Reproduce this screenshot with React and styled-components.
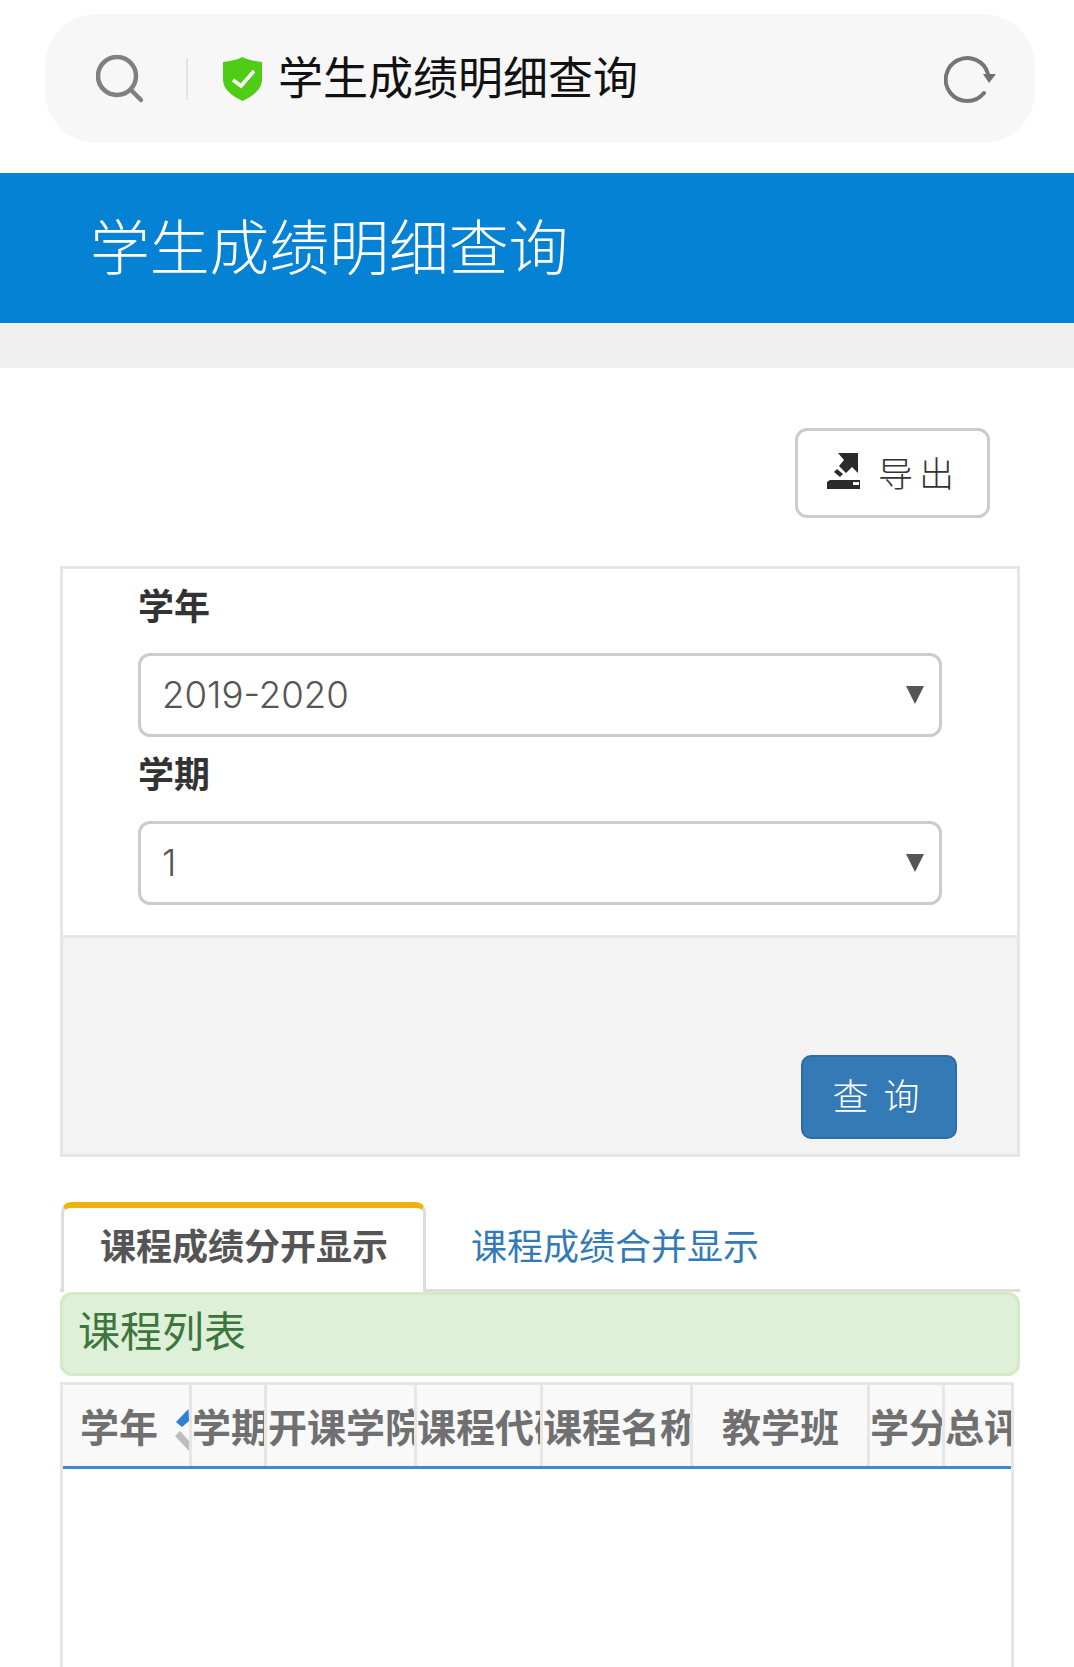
import styled, { createGlobalStyle } from 'styled-components';

const GlobalStyle = createGlobalStyle`
  html, body {
    margin: 0;
    padding: 0;
    background: #ffffff;
  }
  * {
    box-sizing: border-box;
  }
`;

const Page = styled.div`
  width: 1074px;
  height: 1667px;
  overflow: hidden;
  display: flex;
  flex-direction: column;
  font-family: 'Noto Sans CJK SC', 'Noto Sans', sans-serif;
`;

const BrowserBar = styled.div`
  margin: 14px 39px 30px 45px;
  height: 129px;
  flex: none;
  padding: 0 39px 0 51px;
  border-radius: 52px;
  background: #f7f7f7;
  display: flex;
  align-items: center;
`;

const BarDivider = styled.div`
  width: 2px;
  height: 42px;
  margin: 0 34px 0 43px;
  background: #e4e4e4;
`;

const BarTitle = styled.div`
  flex: 1;
  margin-left: 15px;
  padding-bottom: 6px;
  font-size: 45px;
  line-height: 60px;
  color: #111111;
`;

const TitleBand = styled.div`
  height: 150px;
  flex: none;
  padding: 0 0 8px 90px;
  display: flex;
  align-items: center;
  background: #0582d3;
  color: #ffffff;
  font-size: 59.8px;
  font-weight: 300;
`;

const GreyBand = styled.div`
  height: 45px;
  flex: none;
  background: #efefef;
`;

const Toolbar = styled.div`
  flex: none;
  display: flex;
  justify-content: flex-end;
  padding: 60px 84px 48px 0;
`;

const ExportButton = styled.div`
  width: 195px;
  height: 90px;
  padding: 0 0 4px 29px;
  border: 3px solid #cccccc;
  border-radius: 12px;
  display: flex;
  align-items: center;
  gap: 18px;
  font-size: 35px;
  font-weight: 300;
  letter-spacing: 6px;
  color: #333333;
`;

const Panel = styled.div`
  flex: none;
  width: 960px;
  margin-left: 60px;
  border: 3px solid #e6e6e6;
`;

const PanelBody = styled.div`
  padding: 0 75px 30px 75px;
`;

const FieldLabel = styled.div`
  height: 84px;
  padding-top: 10px;
  font-size: 36px;
  line-height: 50px;
  font-weight: 700;
  color: #333333;
`;

const SelectBox = styled.div`
  height: 84px;
  padding: 0 15px 0 21px;
  border: 3px solid #cccccc;
  border-radius: 12px;
  display: flex;
  align-items: center;
  justify-content: space-between;
  font-family: Inter, 'Noto Sans', sans-serif;
  font-size: 36.6px;
  font-weight: 300;
  color: #555555;
`;

const SelectArrow = styled.span`
  width: 0;
  height: 0;
  border-left: 9px solid transparent;
  border-right: 9px solid transparent;
  border-top: 18px solid #555555;
`;

const PanelFooter = styled.div`
  height: 219px;
  padding: 0 60px 15px 0;
  border-top: 3px solid #e6e6e6;
  background: #f3f3f3;
  display: flex;
  align-items: flex-end;
  justify-content: flex-end;
`;

const QueryButton = styled.div`
  width: 156px;
  height: 84px;
  padding: 0 6px 6px 0;
  border: 2px solid #2e6da4;
  border-radius: 10px;
  background: #337ab7;
  color: #ffffff;
  display: flex;
  align-items: center;
  justify-content: center;
  gap: 15px;
  font-size: 36px;
  font-weight: 300;
`;

const TabRow = styled.div`
  flex: none;
  width: 960px;
  height: 90px;
  margin: 45px 0 0 60px;
  border-bottom: 3px solid #dddddd;
  display: flex;
`;

const Tab = styled.div`
  height: 90px;
  display: flex;
  align-items: center;
  white-space: nowrap;
  font-size: 36px;
  padding: 0 0 ${(p) => (p.$active ? '12px 36px' : '6px 45px')};
  color: ${(p) => (p.$active ? '#555555' : '#337ab7')};
  font-weight: ${(p) => (p.$active ? 700 : 400)};
  background: ${(p) => (p.$active ? '#ffffff' : 'transparent')};
  border-radius: 10px 10px 0 0;
  ${(p) =>
    p.$active &&
    `
    margin-left: 1px;
    width: 365px;
    border: 3px solid #dddddd;
    border-top: 6px solid #eeb211;
    border-bottom: none;
  `}
`;

const ListHeading = styled.div`
  flex: none;
  width: 960px;
  height: 84px;
  margin-left: 60px;
  padding: 0 0 12px 15px;
  border: 3px solid #d6e9c6;
  border-radius: 12px;
  background: #dff0d8;
  display: flex;
  align-items: center;
  font-size: 42px;
  color: #3c763d;
`;

const TableWrap = styled.div`
  flex: 1;
  width: 954px;
  margin: 6px 0 0 60px;
  border: 3px solid #e6e6e6;
  border-bottom: none;
`;

const HeadRow = styled.div`
  height: 84px;
  display: flex;
  background: #f9f9f9;
  border-bottom: 3px solid #428bca;
`;

const HeadCell = styled.div`
  position: relative;
  flex: none;
  width: ${(p) => p.$width}px;
  padding-left: ${(p) => p.$pad}px;
  border-right: ${(p) => (p.$last ? 'none' : '3px solid #e6e6e6')};
  overflow: hidden;
  white-space: nowrap;
  font-size: 39px;
  line-height: 81px;
  font-weight: 700;
  color: #707070;
`;

const SortMark = styled.svg`
  position: absolute;
  right: 0;
  top: 24px;
`;

const columns = [
  { label: '学年', width: 129, pad: 17, sortable: true },
  { label: '学期', width: 75, pad: 0 },
  { label: '开课学院', width: 150, pad: 1 },
  { label: '课程代码', width: 126, pad: 0 },
  { label: '课程名称', width: 150, pad: 0 },
  { label: '教学班', width: 177, pad: 29 },
  { label: '学分', width: 75, pad: 0 },
  { label: '总评成绩', width: 66, pad: 0, last: true },
];

function SearchIcon() {
  return (
    <svg width="47" height="48" viewBox="0 0 47 48" fill="none" stroke="#808080">
      <circle cx="21" cy="21" r="19" strokeWidth="4.5" />
      <path d="M35 35 L45 45" strokeWidth="4.5" strokeLinecap="round" />
    </svg>
  );
}

function ShieldIcon() {
  return (
    <svg width="41" height="44" viewBox="0 0 41 44">
      <path d="M20.5 0 C26 3 33 4 40 5 V23 C40 33 29 40 20.5 44 C12 40 1 33 1 23 V5 C8 4 15 3 20.5 0 Z" fill="#50cc14" />
      <path d="M11 23 L19 29 L32 14" fill="none" stroke="#ffffff" strokeWidth="3.5" />
    </svg>
  );
}

function ReloadIcon() {
  return (
    <svg width="52" height="50" viewBox="0 0 52 50" fill="none">
      <path d="M44 20 A21.5 21.5 0 1 0 40 39" stroke="#757575" strokeWidth="4" strokeLinecap="round" />
      <path d="M39 20 H52 L45 29 Z" fill="#707070" />
    </svg>
  );
}

function ExportIcon() {
  return (
    <svg width="33" height="36" viewBox="0 0 33 36">
      <polygon points="11,0 31,0 31,20 25,14 19,20 12,13 17,7" fill="#2b2b2b" />
      <polygon points="7,19 10,16 16,21 13,24" fill="#2b2b2b" />
      <path d="M0 29 L3 27 H33 V36 H0 Z" fill="#2b2b2b" />
      <rect x="26" y="29" width="6" height="3" fill="#ffffff" />
    </svg>
  );
}

export default function App() {
  return (
    <Page>
      <GlobalStyle />
      <BrowserBar>
        <SearchIcon />
        <BarDivider />
        <ShieldIcon />
        <BarTitle>学生成绩明细查询</BarTitle>
        <ReloadIcon />
      </BrowserBar>
      <TitleBand>学生成绩明细查询</TitleBand>
      <GreyBand />
      <Toolbar>
        <ExportButton>
          <ExportIcon />
          <span>导出</span>
        </ExportButton>
      </Toolbar>
      <Panel>
        <PanelBody>
          <FieldLabel>学年</FieldLabel>
          <SelectBox>
            2019-2020
            <SelectArrow />
          </SelectBox>
          <FieldLabel>学期</FieldLabel>
          <SelectBox>
            1
            <SelectArrow />
          </SelectBox>
        </PanelBody>
        <PanelFooter>
          <QueryButton>
            <span>查</span>
            <span>询</span>
          </QueryButton>
        </PanelFooter>
      </Panel>
      <TabRow>
        <Tab $active>课程成绩分开显示</Tab>
        <Tab>课程成绩合并显示</Tab>
      </TabRow>
      <ListHeading>课程列表</ListHeading>
      <TableWrap>
        <HeadRow>
          {columns.map((col) => (
            <HeadCell key={col.label} $width={col.width} $pad={col.pad} $last={col.last}>
              {col.label}
              {col.sortable && (
                <SortMark width="15" height="44" viewBox="0 0 15 44">
                  <polygon points="2,13 14.5,0 15,12 8,18" fill="#2f7fd6" />
                  <polygon points="1,27 6,22 15,32 15,42" fill="#bdbdbd" />
                </SortMark>
              )}
            </HeadCell>
          ))}
        </HeadRow>
      </TableWrap>
    </Page>
  );
}
